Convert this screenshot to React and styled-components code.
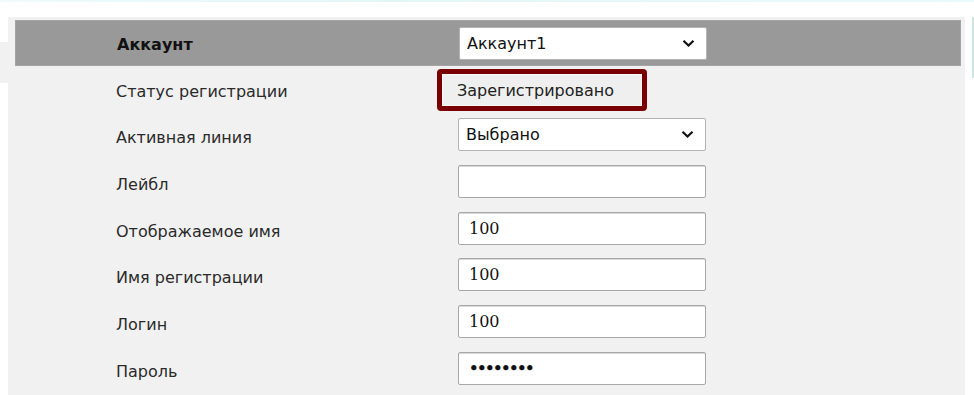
import React from 'react';
import styled, { createGlobalStyle } from 'styled-components';

const Global = createGlobalStyle`
  html, body {
    margin: 0;
    padding: 0;
    background: #ffffff;
  }
  body {
    font-family: "DejaVu Sans", "Liberation Sans", sans-serif;
    color: #222;
  }
`;

const Chevron = () => (
  <svg width="13" height="9" viewBox="0 0 13 9">
    <path d="M1.5 1.8 L6.5 6.6 L11.5 1.8" fill="none" stroke="#111" strokeWidth="2.2" />
  </svg>
);

const rows = [
  { label: 'Активная линия', kind: 'select', value: 'Выбрано' },
  { label: 'Лейбл', kind: 'text', value: '' },
  { label: 'Отображаемое имя', kind: 'text', value: '100' },
  { label: 'Имя регистрации', kind: 'text', value: '100' },
  { label: 'Логин', kind: 'text', value: '100' },
  { label: 'Пароль', kind: 'password', value: '12345678' },
];

const Field = ({ kind, value }) => {
  if (kind === 'select') {
    return (
      <SelectBox $lift>
        <span>{value}</span>
        <Chevron />
      </SelectBox>
    );
  }
  return <Input type={kind} defaultValue={value} />;
};

const App = () => (
  <>
    <Global />
    <TopLine />
    <Page>
      <LeftStrip>
        <LeftBlock />
      </LeftStrip>
      <Panel>
        <Header>
          <HeaderLabel>Аккаунт</HeaderLabel>
          <SelectBox>
            <span>Аккаунт1</span>
            <Chevron />
          </SelectBox>
        </Header>
        <Rows>
          <Row>
            <Label>Статус регистрации</Label>
            <StatusFrame>
              <StatusInner>Зарегистрировано</StatusInner>
            </StatusFrame>
          </Row>
          {rows.map(r => (
            <Row key={r.label}>
              <Label>{r.label}</Label>
              <Field kind={r.kind} value={r.value} />
            </Row>
          ))}
        </Rows>
      </Panel>
      <EdgeLine />
    </Page>
  </>
);

export default App;

const TopLine = styled.div`
  height: 2px;
  background: linear-gradient(90deg, #eefbfb, #e3f6f6 40%, #eafafa);
`;

const Page = styled.div`
  display: flex;
  align-items: flex-start;
  padding-top: 15px;
  height: 378px;
  overflow: hidden;
`;

const LeftStrip = styled.div`
  width: 8px;
  flex: none;
  padding-top: 25px;
`;

const LeftBlock = styled.div`
  height: 41px;
  background: #f1f1f1;
`;

const Panel = styled.div`
  width: 957px;
  flex: none;
  height: 100%;
  background: #f1f1f1;
  box-sizing: border-box;
  padding: 3px 4px 0 7px;
`;

const Header = styled.div`
  display: grid;
  grid-template-columns: 342px 248px;
  align-items: center;
  height: 46px;
  box-sizing: border-box;
  padding-left: 101px;
  background: #999999;
  border: 1px solid #a4a4a4;
`;

const HeaderLabel = styled.div`
  font-weight: bold;
  font-size: 16px;
  color: #111;
  padding-top: 2px;
`;

const Rows = styled.div`
  padding-top: 0;
`;

const Row = styled.div`
  display: grid;
  grid-template-columns: 342px 248px;
  align-items: center;
  height: 46.67px;
  padding-left: 101px;
`;

const Label = styled.div`
  font-size: 16px;
  color: #2a2a2a;
  padding-top: 4px;
`;

const SelectBox = styled.div`
  display: flex;
  align-items: center;
  justify-content: space-between;
  box-sizing: border-box;
  width: 248px;
  height: 33px;
  margin-bottom: ${p => (p.$lift ? '2px' : '0')};
  padding: 0 11px 0 7px;
  background: #fff;
  border: 1px solid #b4b4b4;
  border-radius: 2px;
  font-size: 16px;
  color: #111;
`;

const Input = styled.input`
  display: block;
  box-sizing: border-box;
  width: 248px;
  height: 33px;
  margin: 0 0 2px;
  padding: 0 10px;
  background: #fff;
  border: 1px solid #a8a8a8;
  border-radius: 2px;
  box-shadow: inset 0 1px 0 #d8d8d8;
  font-family: "DejaVu Serif", "Liberation Serif", serif;
  font-size: ${p => (p.type === 'password' ? '15px' : '16px')};
  font-weight: ${p => (p.type === 'password' ? 'bold' : 'normal')};
  letter-spacing: ${p => (p.type === 'password' ? '-1.6px' : '0')};
  color: #111;
  outline: none;
`;

const StatusFrame = styled.div`
  margin-left: -21px;
  width: 210px;
  height: 42px;
  box-sizing: border-box;
  border: 5px solid #7a0000;
  border-radius: 4px;
  margin-top: 2px;
`;

const StatusInner = styled.div`
  height: 100%;
  box-sizing: border-box;
  border: 1px solid #fafafa;
  background: #efefef;
  padding-left: 14px;
  display: flex;
  align-items: center;
  font-size: 16px;
  color: #222;
`;

const EdgeLine = styled.div`
  width: 2px;
  height: 61px;
  margin-left: 7px;
  background: #cfe6e0;
  flex: none;
`;
